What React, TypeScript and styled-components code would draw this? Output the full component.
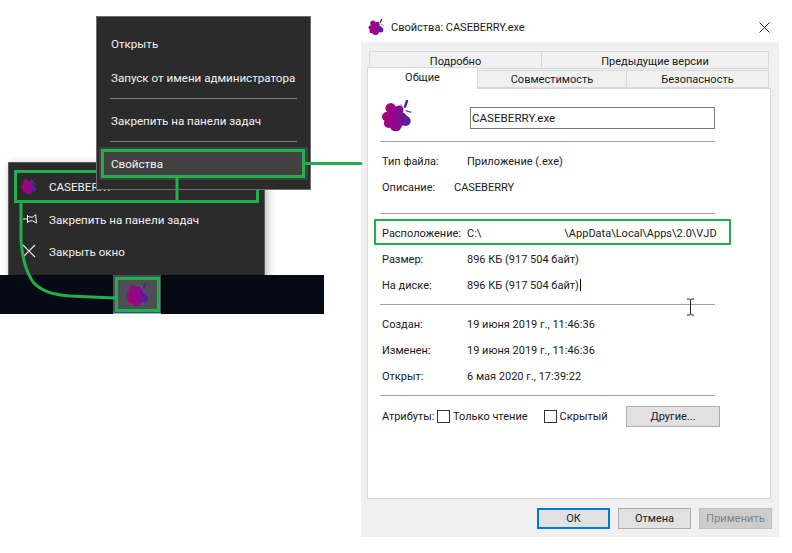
import React, { useId } from "react";
import styled, { createGlobalStyle } from "styled-components";

const green = "#22b04f";
const uiFont = `Roboto, "Noto Sans", sans-serif`;

const GlobalStyle = createGlobalStyle`
  html, body {
    margin: 0;
    padding: 0;
    background: #fff;
    font-family: ${uiFont};
  }
`;

const Stage = styled.div`
  position: relative;
  width: 792px;
  height: 553px;
  overflow: hidden;
  background: #fff;
`;

/* context menu of the exe */
const ShellMenu = styled.div`
  position: absolute;
  left: 96px;
  top: 16px;
  z-index: 3;
  width: 215px;
  height: 174px;
  box-sizing: border-box;
  padding-top: 10px;
  background: #2b2b2b;
  border: 1px solid #6f6f6f;
  color: #f2f2f2;
  font-size: 11.6px;
`;

const ShellItem = styled.div`
  height: 34px;
  display: flex;
  align-items: center;
  padding-left: 14px;
`;

const ShellDivider = styled.div`
  height: 1px;
  margin: 3px 13px 5px;
  background: #7c7c7c;
`;

const ShellActive = styled.div`
  position: relative;
  height: 33px;
  margin: 3px 2px 0;
  padding-left: 12px;
  display: flex;
  align-items: center;
  background: #414141;

  &::after {
    content: "";
    position: absolute;
    left: 2px;
    right: 3px;
    top: 2px;
    bottom: 2px;
    border: 3px solid ${green};
  }
`;

/* taskbar jump list */
const JumpList = styled.div`
  position: absolute;
  left: 8px;
  top: 162px;
  z-index: 1;
  width: 257px;
  height: 120px;
  box-sizing: border-box;
  padding: 7px 5px 0;
  background: #2b2b2b;
  border: 1px solid #5c5c5c;
  box-shadow: 2px 2px 8px rgba(0, 0, 0, 0.3);
  color: #f2f2f2;
  font-size: 11.6px;
`;

const JumpHead = styled.div`
  height: 33px;
  box-sizing: border-box;
  border: 3px solid ${green};
  display: flex;
  align-items: center;
  gap: 12px;
  padding-left: 4px;
  margin-bottom: 1px;
`;

const JumpItem = styled.div`
  height: 32px;
  display: flex;
  align-items: center;
  gap: 12px;
  padding-left: 7px;
`;

const JumpGlyph = styled.svg`
  width: 16px;
  height: 16px;
  flex: none;
`;

const Taskbar = styled.div`
  position: absolute;
  left: 0;
  top: 275px;
  z-index: 2;
  width: 324px;
  height: 39px;
  padding-left: 113px;
  box-sizing: border-box;
  background: #050b14;
`;

const TaskTile = styled.div`
  width: 48px;
  height: 39px;
  box-sizing: border-box;
  padding: 2px 1px 1px 2px;
  background: #4d4f55;
  border-bottom: 1px solid #76b9ed;
`;

const TaskFrame = styled.div`
  height: 35px;
  box-sizing: border-box;
  border: 3px solid ${green};
  display: flex;
  align-items: center;
  justify-content: center;
`;

const Connectors = styled.svg`
  position: absolute;
  left: 0;
  top: 0;
  z-index: 4;
  pointer-events: none;
`;

/* properties dialog */
const Dialog = styled.div`
  position: absolute;
  left: 361px;
  top: 10px;
  width: 418px;
  font-size: 11px;
  color: #1a1a1a;
`;

const TitleBar = styled.div`
  height: 32px;
  box-sizing: border-box;
  padding: 2px 9px 0 7px;
  display: flex;
  align-items: center;
  gap: 7px;
  background: #fff;
`;

const CloseGlyph = styled.svg`
  margin-left: auto;
  width: 11px;
  height: 11px;
`;

const DialogBody = styled.div`
  height: 495px;
  box-sizing: border-box;
  padding: 9px 7px 0 6px;
  background: #f0f0f0;
`;

const TabRow = styled.div<{ $inset?: number; $overlap?: boolean }>`
  display: flex;
  align-items: flex-end;
  margin-left: ${(p) => p.$inset ?? 0}px;
  margin-top: ${(p) => (p.$overlap ? -2 : 0)}px;
  height: ${(p) => (p.$overlap ? 21 : 18)}px;
`;

const Tab = styled.div<{ $width: number; $active?: boolean }>`
  position: relative;
  width: ${(p) => p.$width}px;
  height: ${(p) => (p.$active ? 22 : 18)}px;
  margin-bottom: ${(p) => (p.$active ? -1 : 0)}px;
  padding-bottom: ${(p) => (p.$active ? 3 : 0)}px;
  z-index: ${(p) => (p.$active ? 1 : 0)};
  box-sizing: border-box;
  display: flex;
  align-items: center;
  justify-content: center;
  background: ${(p) => (p.$active ? "#fff" : "#f0f0f0")};
  border: 1px solid #d9d9d9;
  border-left-width: ${(p) => (p.$active ? 1 : 0)}px;
  border-bottom-width: ${(p) => (p.$active ? 0 : 1)}px;
`;

const TopTab = styled(Tab)`
  padding-top: 2px;

  &:first-child {
    border-left-width: 1px;
  }
`;

const Panel = styled.div`
  width: 404px;
  height: 411px;
  box-sizing: border-box;
  padding: 0 55px 0 12px;
  background: #fff;
  border: 1px solid #d9d9d9;
`;

const FileHead = styled.div`
  height: 46px;
  box-sizing: border-box;
  padding: 8px 0 0 1px;
  display: flex;
  align-items: center;
`;

const NameField = styled.div`
  width: 246px;
  height: 22px;
  margin-left: 58px;
  margin-top: 4px;
  box-sizing: border-box;
  padding-left: 1px;
  display: flex;
  align-items: center;
  font-size: 11.6px;
  border: 1px solid #7a7a7a;
`;

const Divider = styled.div<{ $roomy?: boolean }>`
  height: 1px;
  margin: ${(p) => (p.$roomy ? 13 : 6)}px 0 6px;
  background: #a0a0a0;
`;

const InfoRow = styled.div<{ $marked?: boolean }>`
  position: relative;
  height: 26px;
  display: flex;
  align-items: center;
  padding-left: 2px;

  ${(p) =>
    p.$marked &&
    `&::after {
      content: "";
      position: absolute;
      left: -6px;
      right: -16px;
      top: -1px;
      bottom: 1px;
      border: 2px solid ${green};
    }`}
`;

const InfoLabel = styled.span<{ $width?: number }>`
  width: ${(p) => p.$width ?? 85}px;
  flex: none;
`;

const PathTail = styled.span`
  margin-left: 83px;
`;

const Caret = styled.span`
  display: inline-block;
  width: 1px;
  height: 12px;
  margin-left: 1px;
  vertical-align: -2px;
  background: #000;
`;

const AttrRow = styled.div`
  height: 22px;
  margin-top: 9px;
  padding-left: 2px;
  display: flex;
  align-items: center;
`;

const Check = styled.span<{ $gap?: number }>`
  width: 13px;
  height: 13px;
  flex: none;
  box-sizing: border-box;
  margin: 0 3px 0 ${(p) => p.$gap ?? 0}px;
  border: 1px solid #333;
  background: #fff;
`;

const Button = styled.div<{ $kind?: "default" | "disabled" }>`
  width: 73px;
  height: 21px;
  box-sizing: border-box;
  display: flex;
  align-items: center;
  justify-content: center;
  background: ${(p) => (p.$kind === "disabled" ? "#cccccc" : "#e1e1e1")};
  color: ${(p) => (p.$kind === "disabled" ? "#838383" : "#1a1a1a")};
  border: ${(p) =>
    p.$kind === "default"
      ? "2px solid #0078d7"
      : p.$kind === "disabled"
        ? "1px solid #bfbfbf"
        : "1px solid #adadad"};
`;

const MoreButton = styled(Button)`
  width: 94px;
  margin-left: auto;
  margin-right: -5px;
`;

const DialogActions = styled.div`
  display: flex;
  justify-content: flex-end;
  gap: 8px;
  margin-top: 9px;
`;

const TextCursor = styled.svg`
  position: absolute;
  left: 686px;
  top: 298px;
  z-index: 5;
`;

function Berry({ size }: { size: number }) {
  const id = useId();
  return (
    <svg width={size} height={size * (32 / 31)} viewBox="0 0 31 32" style={{ flex: "none" }}>
      <defs>
        <linearGradient id={id} gradientUnits="userSpaceOnUse" x1="2" y1="0" x2="29" y2="0">
          <stop offset="0" stopColor="#a8007c" />
          <stop offset="0.55" stopColor="#8c0a8c" />
          <stop offset="1" stopColor="#4a20a6" />
        </linearGradient>
      </defs>
      <g fill={`url(#${id})`}>
        <circle cx="9.700" cy="8.300" r="5.300" />
        <circle cx="18" cy="10" r="4.500" />
        <circle cx="5.700" cy="16.700" r="4.700" />
        <circle cx="24.700" cy="21" r="5" />
        <circle cx="14.700" cy="25" r="6.300" />
        <circle cx="7.500" cy="23.300" r="4.700" />
        <circle cx="14" cy="16.700" r="8" />
        <circle cx="19.500" cy="19" r="7" />
      </g>
      <path d="M26.300 0 23.700 7.700" stroke="#5b1aa0" strokeWidth="2.400" fill="none" />
      <path d="M30.300 12.300 24.700 10.700" stroke="#6c3ab0" strokeWidth="1.300" fill="none" />
      <path d="M19.700 4.300 22.300 8.300" stroke="#9a5ab8" strokeWidth="1" fill="none" />
    </svg>
  );
}

export default function App() {
  return (
    <Stage>
      <GlobalStyle />

      <JumpList>
        <JumpHead>
          <Berry size={16} />
          <span>CASEBERRY</span>
        </JumpHead>
        <JumpItem>
          <JumpGlyph viewBox="0 0 16 16" fill="none" stroke="#f2f2f2" strokeWidth="1">
            <path d="M2 7H6.500M6.500 3V11M6.500 4.500 11.300 5.300 14.700 2.700 15.500 11 11.300 8.700 6.500 9.500" />
          </JumpGlyph>
          <span>Закрепить на панели задач</span>
        </JumpItem>
        <JumpItem>
          <JumpGlyph viewBox="0 0 16 16" fill="none" stroke="#f2f2f2" strokeWidth="1.100">
            <path d="M2 1 14 13M14 1 2 13" />
          </JumpGlyph>
          <span>Закрыть окно</span>
        </JumpItem>
      </JumpList>

      <Taskbar>
        <TaskTile>
          <TaskFrame>
            <Berry size={23} />
          </TaskFrame>
        </TaskTile>
      </Taskbar>

      <ShellMenu>
        <ShellItem>Открыть</ShellItem>
        <ShellItem>Запуск от имени администратора</ShellItem>
        <ShellDivider />
        <ShellItem>Закрепить на панели задач</ShellItem>
        <ShellDivider />
        <ShellActive>Свойства</ShellActive>
      </ShellMenu>

      <Connectors width="792" height="553" fill="none" stroke={green}>
        <path d="M304 163.500H361" strokeWidth="3" strokeLinecap="round" />
        <path d="M177 178V201" strokeWidth="3" />
        <path
          d="M21 202V240C22 256 25 270 33 282C40 290 52 295 70 296L115 298"
          strokeWidth="3"
        />
      </Connectors>

      <Dialog>
        <TitleBar>
          <Berry size={16} />
          <span>Свойства: CASEBERRY.exe</span>
          <CloseGlyph viewBox="0 0 11 11" fill="none" stroke="#222" strokeWidth="1">
            <path d="M.5.500 10.500 10.500M10.500.500 .5 10.500" />
          </CloseGlyph>
        </TitleBar>
        <DialogBody>
          <TabRow $inset={2}>
            <TopTab $width={173}>Подробно</TopTab>
            <TopTab $width={227}>Предыдущие версии</TopTab>
          </TabRow>
          <TabRow $overlap>
            <Tab $width={111} $active>
              Общие
            </Tab>
            <Tab $width={149}>Совместимость</Tab>
            <Tab $width={142}>Безопасность</Tab>
          </TabRow>
          <Panel>
            <FileHead>
              <Berry size={31} />
              <NameField>CASEBERRY.exe</NameField>
            </FileHead>
            <Divider />
            <InfoRow>
              <InfoLabel>Тип файла:</InfoLabel>
              <span>Приложение (.exe)</span>
            </InfoRow>
            <InfoRow>
              <InfoLabel $width={72}>Описание:</InfoLabel>
              <span>CASEBERRY</span>
            </InfoRow>
            <Divider $roomy />
            <InfoRow $marked>
              <InfoLabel>Расположение:</InfoLabel>
              <span>C:\</span>
              <PathTail>\AppData\Local\Apps\2.0\VJD</PathTail>
            </InfoRow>
            <InfoRow>
              <InfoLabel>Размер:</InfoLabel>
              <span>896 КБ (917 504 байт)</span>
            </InfoRow>
            <InfoRow>
              <InfoLabel>На диске:</InfoLabel>
              <span>
                896 КБ (917 504 байт)
                <Caret />
              </span>
            </InfoRow>
            <Divider />
            <InfoRow>
              <InfoLabel>Создан:</InfoLabel>
              <span>19 июня 2019 г., 11:46:36</span>
            </InfoRow>
            <InfoRow>
              <InfoLabel>Изменен:</InfoLabel>
              <span>19 июня 2019 г., 11:46:36</span>
            </InfoRow>
            <InfoRow>
              <InfoLabel>Открыт:</InfoLabel>
              <span>6 мая 2020 г., 17:39:22</span>
            </InfoRow>
            <Divider />
            <AttrRow>
              <InfoLabel $width={55}>Атрибуты:</InfoLabel>
              <Check />
              <span>Только чтение</span>
              <Check $gap={16} />
              <span>Скрытый</span>
              <MoreButton>Другие...</MoreButton>
            </AttrRow>
          </Panel>
          <DialogActions>
            <Button $kind="default">ОК</Button>
            <Button>Отмена</Button>
            <Button $kind="disabled">Применить</Button>
          </DialogActions>
        </DialogBody>
      </Dialog>

      <TextCursor width="9" height="18" viewBox="0 0 9 18" fill="none" stroke="#222" strokeWidth="1">
        <path d="M1 1H3.500L4.500 2 5.500 1H8M4.500 2V16M1 17H3.500L4.500 16 5.500 17H8" />
      </TextCursor>
    </Stage>
  );
}
